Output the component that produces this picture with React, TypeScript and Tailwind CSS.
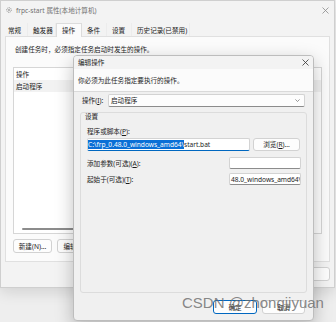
import React from 'react';

const CloseIcon = ({ className }: { className?: string }) => (
  <svg width="7" height="7" viewBox="0 0 7 7" className={className}>
    <path d="M0.5 0.5L6.5 6.5M6.5 0.5L0.5 6.5" stroke="currentColor" strokeWidth="0.8" fill="none" />
  </svg>
);

const GearIcon = () => (
  <svg width="6" height="6" viewBox="0 0 6 6">
    <circle cx="3" cy="3" r="2.3" fill="none" stroke="#8a8a8a" strokeWidth="0.9" strokeDasharray="1 0.6" />
    <circle cx="3" cy="3" r="0.9" fill="#9a9a9a" />
  </svg>
);

const tabs = [
  { label: '常规', w: 'w-[25px]' },
  { label: '触发器', w: 'w-[28px]' },
  { label: '操作', w: 'w-[26px]', active: true },
  { label: '条件', w: 'w-[25px]' },
  { label: '设置', w: 'w-[25px]' },
  { label: '历史记录(已禁用)', w: 'w-[58px]' },
];

const WinButton = ({ children, w, focused }: { children: React.ReactNode; w: string; focused?: boolean }) => (
  <div
    className={`flex h-[14px] ${w} items-center justify-center whitespace-nowrap rounded-[3px] border bg-[#fdfdfd] ${
      focused ? 'border-[#0067c0]' : 'border-[#d2d2d2]'
    }`}
  >
    {children}
  </div>
);

export default function App() {
  return (
    <div className="relative h-[322px] w-[336px] overflow-hidden bg-[#eeeeee] font-['Noto_Sans','Noto_Sans_CJK_SC',sans-serif] text-[6.6px] leading-[9px] text-[#1b1b1b]">
      {/* property window behind */}
      <div className="absolute left-0 top-0 flex h-[288px] w-[335px] flex-col border border-[#cfcfcf] bg-[#f3f3f3] shadow-[0_4px_14px_rgba(0,0,0,0.12)]">
        <div className="flex h-[18px] items-center pl-[5px] pr-[5px] text-[#707070]">
          <GearIcon />
          <span className="ml-[4px]">frpc-start 属性(本地计算机)</span>
          <CloseIcon className="ml-auto text-[#8a8a8a]" />
        </div>

        <div className="mt-[4px] flex h-[14px] pl-[2px]">
          {tabs.map((t) => (
            <div
              key={t.label}
              className={`flex ${t.w} items-center whitespace-nowrap pl-[5px] ${
                t.active
                  ? 'relative z-10 border border-b-0 border-[#dcdcdc] bg-[#fbfbfb] pl-[3px]'
                  : 'border-r border-[#ececec]'
              }`}
            >
              {t.label}
            </div>
          ))}
        </div>

        <div className="mx-[4px] -mt-px flex h-[226px] flex-col border border-[#e0e0e0] bg-[#fbfbfb] px-[7px] pt-[8px]">
          <div className="ml-[2px]">创建任务时，必须指定任务启动时发生的操作。</div>
          <div className="mt-[13px] flex h-[167px] flex-col border border-[#d6d6d6] bg-white">
            <div className="flex h-[12px] items-center pl-[2px]">操作</div>
            <div className="flex h-[12px] items-center bg-[#f2f2f2] pl-[2px]">启动程序</div>
            <div className="mx-[8px] mb-[3px] mt-auto h-[2px] rounded-full bg-[#8c8c8c]" />
          </div>
          <div className="mt-[5px] flex gap-[5px]">
            <WinButton w="w-[39px]">新建(N)...</WinButton>
            <WinButton w="w-[39px]">编辑(E)...</WinButton>
            <WinButton w="w-[39px]">删除(D)</WinButton>
          </div>
        </div>

        <div className="mt-[5px] flex justify-end gap-[5px] pr-[4px]">
          <WinButton w="w-[50px]">确定</WinButton>
          <WinButton w="w-[50px]">取消</WinButton>
        </div>
      </div>

      {/* edit action dialog */}
      <div className="absolute left-[73px] top-[55px] flex h-[266px] w-[241px] flex-col overflow-hidden rounded-[4px] border border-[#bdbdbd] bg-[#f0f0f0] shadow-[0_6px_18px_rgba(0,0,0,0.25)]">
        <div className="flex h-[13px] items-center bg-[#f3f3f3] pl-[4px] pr-[4px]">
          <span>编辑操作</span>
          <CloseIcon className="ml-auto text-[#333]" />
        </div>
        <div className="flex h-[23px] items-center border-b border-[#dadada] bg-[#fbfbfb] pl-[4px]">
          你必须为此任务指定要执行的操作。
        </div>

        <div className="flex flex-1 flex-col px-[8px] pt-[2px]">
          <div className="flex items-center">
            <span className="w-[26px]">操作(<span className="underline">I</span>):</span>
            <div className="flex h-[13px] flex-1 items-center justify-between rounded-[2px] border border-[#d3d3d3] border-b-[#8c8c8c] bg-[#fdfdfd] pl-[2px] pr-[4px]">
              <span>启动程序</span>
              <svg width="5" height="3" viewBox="0 0 5 3">
                <path d="M0.4 0.4L2.5 2.5L4.6 0.4" stroke="#555" strokeWidth="0.6" fill="none" />
              </svg>
            </div>
          </div>

          <div className="-mx-[2px] mt-[5px] flex h-[181px] flex-col rounded-[3px] border border-[#dcdcdc] bg-[#f0f0f0] pl-[6px] pr-[5px]">
            <div className="-ml-[2px] -mt-px">设置</div>
            <div className="mt-[6px]">程序或脚本(<span className="underline">P</span>):</div>
            <div className="mt-[2px] flex gap-[3px]">
              <div className="flex h-[13px] w-[163px] items-center overflow-hidden whitespace-nowrap rounded-[2px] border border-[#d3d3d3] border-b-[#0067c0] bg-white">
                <span className="bg-[#0a6fd6] text-white">C:\frp_0.48.0_windows_amd64\</span>
                <span>start.bat</span>
              </div>
              <div className="flex h-[13px] w-[47px] items-center justify-center rounded-[3px] border border-[#d2d2d2] bg-[#fdfdfd]">
                浏览(<span className="underline">R</span>)...
              </div>
            </div>
            <div className="mt-[6px] flex h-[12px] items-center">
              <span className="flex-1">添加参数(可选)(<span className="underline">A</span>):</span>
              <div className="h-[12px] w-[72px] rounded-[2px] border border-[#d3d3d3] border-b-[#8c8c8c] bg-white" />
            </div>
            <div className="mt-[4px] flex h-[12px] items-center">
              <span className="flex-1">起始于(可选)(<span className="underline">T</span>):</span>
              <div className="flex h-[12px] w-[72px] items-center overflow-hidden whitespace-nowrap rounded-[2px] border border-[#d3d3d3] border-b-[#8c8c8c] bg-white pl-px">
                48.0_windows_amd64\
              </div>
            </div>
          </div>

          <div className="mt-[7px] flex justify-end gap-[5px]">
            <WinButton w="w-[44px]" focused>确定</WinButton>
            <WinButton w="w-[43px]">取消</WinButton>
          </div>
        </div>
      </div>

      {/* watermark */}
      <div className="absolute left-[182px] top-[294px] font-['Liberation_Sans',sans-serif] text-[15px] leading-[18px] text-[#6a6a6a]/80">
        CSDN @zhongjiyuan
      </div>
    </div>
  );
}
